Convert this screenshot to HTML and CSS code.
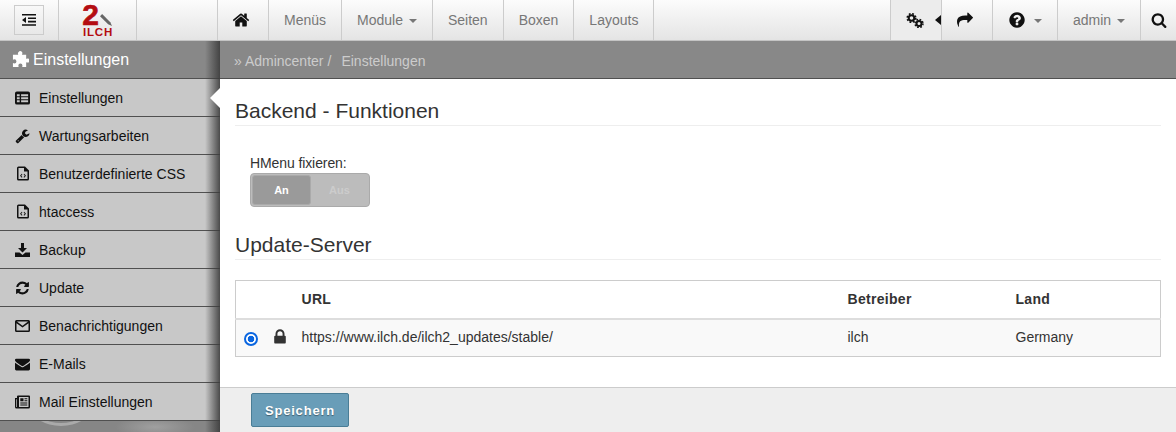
FILE: index.html
```html
<!DOCTYPE html>
<html lang="de">
<head>
<meta charset="utf-8">
<title>Einstellungen</title>
<link rel="stylesheet" href="styles.css">
</head>
<body>
<svg class="defs" width="0" height="0">
  <defs>
    <symbol id="i-home" viewBox="0 0 1792 1792"><path d="M1472 992v480q0 26-19 45t-45 19h-384v-384h-256v384h-384q-26 0-45-19t-19-45v-480q0-1 .5-3t.5-3l575-474 575 474q1 2 1 6zm223-69l-62 74q-8 9-21 11h-3q-13 0-21-7l-692-577-692 577q-12 8-24 7-13-2-21-11l-62-74q-8-10-7-23.500t11-21.500l719-599q32-26 76-26t76 26l244 204v-195q0-14 9-23t23-9h192q14 0 23 9t9 23v408l219 182q10 8 11 21.500t-7 23.500z"/></symbol>
    <symbol id="i-search" viewBox="0 0 1792 1792"><path d="M1216 832q0-185-131.500-316.500t-316.500-131.500-316.500 131.500-131.500 316.500 131.500 316.500 316.500 131.500 316.500-131.500 131.500-316.500zm512 832q0 52-38 90t-90 38q-54 0-90-38l-343-342q-179 124-399 124-143 0-273.500-55.500t-225-150-150-225-55.500-273.500 55.500-273.500 150-225 225-150 273.500-55.500 273.500 55.500 225 150 150 225 55.500 273.500q0 220-124 399l343 343q37 37 37 90z"/></symbol>
    <symbol id="i-lock" viewBox="0 0 1792 1792"><path d="M640 768h512v-192q0-106-75-181t-181-75-181 75-75 181v192zm832 96v576q0 40-28 68t-68 28h-960q-40 0-68-28t-28-68v-576q0-40 28-68t68-28h32v-192q0-184 132-316t316-132 316 132 132 316v192h32q40 0 68 28t28 68z"/></symbol>
    <symbol id="i-question" viewBox="0 0 1792 1792"><path d="M1024 1376v-192q0-14-9-23t-23-9h-192q-14 0-23 9t-9 23v192q0 14 9 23t23 9h192q14 0 23-9t9-23zm256-672q0-88-55.500-163t-138.500-116-170-41q-243 0-371 213-15 24 8 42l132 100q7 6 19 6 16 0 25-12 53-68 86-92 34-24 86-24 48 0 85.500 26t37.500 59q0 38-20 61t-68 45q-63 28-115.500 86.500t-52.500 125.500v36q0 14 9 23t23 9h192q14 0 23-9t9-23q0-19 21.500-49.500t54.500-49.500q32-18 49-28.500t46-35 44.500-48 28-60.500 12.500-81zm384 192q0 209-103 385.500t-279.500 279.500-385.500 103-385.500-103-279.500-279.500-103-385.500 103-385.500 279.500-279.500 385.500-103 385.500 103 279.500 279.500 103 385.500z"/></symbol>
    <symbol id="i-share" viewBox="0 0 1792 1792"><path d="M1792 640q0 26-19 45l-512 512q-19 19-45 19t-45-19-19-45v-256h-224q-98 0-175.500 6t-154 21.500-133 42.500-105.500 69.500-80 101-48.500 138.500-17.500 181q0 55 5 123 0 6 2.500 23.500t2.500 26.500q0 15-8.500 25t-23.500 10q-16 0-28-17-7-9-13-22t-13.500-30-10.500-24q-127-285-127-451 0-199 53-333 162-403 875-403h224v-256q0-26 19-45t45-19 45 19l512 512q19 19 19 45z"/></symbol>
    <symbol id="i-envelope" viewBox="0 0 1792 1792"><path d="M1792 710v794q0 66-47 113t-113 47h-1472q-66 0-113-47t-47-113v-794q44 49 101 87 362 246 497 345 57 42 92.500 65.500t94.500 48 110 24.500h2q51 0 110-24.500t94.500-48 92.500-65.500q170-123 498-345 57-39 100-87zm0-294q0 79-49 151t-122 123q-376 261-468 325-10 7-42.500 30.500t-54 38-52 32.500-57.500 27-50 9h-2q-23 0-50-9t-57.500-27-52-32.500-54-38-42.500-30.500q-91-64-262-182.500t-205-142.500q-62-42-117-115.500t-55-136.500q0-78 41.500-130t118.500-52h1472q65 0 112.500 47t47.500 113z"/></symbol>
    <symbol id="i-refresh" viewBox="0 0 1792 1792"><path d="M1639 1056q0 5-1 7-64 268-268 434.500t-478 166.500q-146 0-282.500-55t-243.500-157l-129 129q-19 19-45 19t-45-19-19-45v-448q0-26 19-45t45-19h448q26 0 45 19t19 45-19 45l-137 137q71 66 161 102t187 36q134 0 250-65t186-179q11-17 53-117 8-23 30-23h192q13 0 22.500 9.500t9.500 22.500zm25-800v448q0 26-19 45t-45 19h-448q-26 0-45-19t-19-45 19-45l138-138q-148-137-349-137-134 0-250 65t-186 179q-11 17-53 117-8 23-30 23h-199q-13 0-22.500-9.500t-9.500-22.500v-7q65-268 270-434.500t480-166.500q146 0 284 55.500t245 156.500l130-129q19-19 45-19t45 19 19 45z"/></symbol>
    <symbol id="i-wrench" viewBox="0 0 1792 1792"><path d="M448 1472q0-26-19-45t-45-19-45 19-19 45 19 45 45 19 45-19 19-45zm644-420l-682 682q-37 37-90 37-52 0-91-37l-106-108q-38-36-38-90 0-53 38-91l681-681q39 98 114.500 173.500t173.500 114.500zm634-435q0 39-23 106-47 134-164.500 217.500t-258.500 83.500q-185 0-316.500-131.500t-131.500-316.500 131.500-316.500 316.500-131.500q58 0 121.500 16.500t107.500 46.500q16 11 16 28t-16 28l-293 169v224l193 107q5-3 79-48.500t135.500-81 70.500-35.500q15 0 23.500 10t8.500 25z"/></symbol>
    <symbol id="i-table" viewBox="0 0 16 14"><path fill-rule="evenodd" d="M2 0h12a2 2 0 0 1 2 2v10a2 2 0 0 1-2 2H2a2 2 0 0 1-2-2V2a2 2 0 0 1 2-2zM2 3v2h3V3zm4.500 0v2H14V3zM2 6.200v2h3v-2zm4.500 0v2H14v-2zM2 9.500v2h3v-2zm4.500 0v2H14v-2z"/></symbol>
    <symbol id="i-code" viewBox="0 0 12 14"><path fill-rule="evenodd" d="M2 0h6l4 4v8.500A1.500 1.500 0 0 1 10.500 14h-9A1.500 1.500 0 0 1 0 12.500v-11A1.500 1.500 0 0 1 1.500 0zM1.500 1.500v11h9V5H7V1.500z"/><path d="M4.800 7.200l.6.6-1.200 1.400 1.200 1.400-.6.600-1.800-2zM7.200 7.200l1.800 2-1.800 2-.6-.6 1.200-1.400-1.200-1.400z"/></symbol>
    <symbol id="i-download" viewBox="0 0 15 14"><path d="M6 0h3v5h3L7.500 9.500 3 5h3z"/><path d="M0 9.500h4.500l3 2.500 3-2.500H15V14H0z"/></symbol>
    <symbol id="i-envelope-o" viewBox="0 0 15 12"><path fill-rule="evenodd" d="M1.500 0h12A1.500 1.500 0 0 1 15 1.500v9a1.500 1.500 0 0 1-1.500 1.500h-12A1.500 1.500 0 0 1 0 10.500v-9A1.500 1.500 0 0 1 1.500 0zm0 3.200v7.300h12V3.200L7.500 7.600zm.4-1.700l5.600 4.300 5.600-4.300z"/></symbol>
    <symbol id="i-news" viewBox="0 0 15 13"><path fill-rule="evenodd" d="M3 0h11a1 1 0 0 1 1 1v10.500a1.500 1.500 0 0 1-1.500 1.500H1.500A1.500 1.500 0 0 1 0 11.500V2.500h2V1a1 1 0 0 1 1-1zM1.300 3.800v7.700h.7V3.800zM4 1.500v10h9.500v-10zM5.300 2.800h3.200v3H5.300zm4.200 0h2.800v1H9.500zm0 2h2.800v1H9.500zM5.300 7h7v1h-7zm0 2h7v1h-7z"/></symbol>
    <symbol id="i-puzzle" viewBox="0 0 18 18"><path d="M7 1a2.200 2.200 0 0 1 4 1.500c0 .6-.4 1-.4 1.500H15v4.300c.5 0 1-.4 1.500-.4a2.200 2.200 0 0 1 0 4.400c-.5 0-1-.4-1.500-.4V17h-4.300c0-.5.4-1 .4-1.500a2.200 2.200 0 0 0-4.400 0c0 .5.4 1 .4 1.500H1v-4.200c.5 0 1 .4 1.500.4a2.200 2.200 0 0 0 0-4.400c-.5 0-1 .4-1.500.4V4h5.600c0-.5-.4-1-.4-1.500 0-.5.300-1.100.8-1.500z"/></symbol>
    <symbol id="i-indent" viewBox="0 0 14 12"><path d="M0 0h14v1.600H0zM6 3.400h8V5H6zM6 6.800h8v1.600H6zM0 10.200h14v1.600H0zM4 3v6L0 6z"/></symbol>
    <symbol id="i-cogs" viewBox="0 0 18 15"><circle cx="5.500" cy="5" r="2.800" fill="none" stroke="currentColor" stroke-width="2"/><circle cx="5.500" cy="5" r="4.300" fill="none" stroke="currentColor" stroke-width="1.600" stroke-dasharray="1.800 1.600"/><circle cx="13" cy="10.500" r="2.500" fill="none" stroke="currentColor" stroke-width="2"/><circle cx="13" cy="10.500" r="4" fill="none" stroke="currentColor" stroke-width="1.500" stroke-dasharray="1.700 1.450"/></symbol>
  </defs>
</svg>

<header class="topbar">
  <div class="nav-cell toggle-cell"><button class="side-toggle" type="button"><svg class="ic ic-14"><use href="#i-indent"/></svg></button></div>
  <div class="nav-cell brand">
    <svg class="pencil" viewBox="0 0 14 14"><path d="M0 2.500L2.500 0 12 9.500 14 14 9.500 12z" fill="#666"/></svg>
    <span class="brand-two">2</span>
    <span class="brand-name">ILCH</span>
  </div>
  <div class="nav-cell brand-gap"></div>
  <a class="nav-item nav-icon"><svg class="ic ic-home"><use href="#i-home"/></svg></a>
  <a class="nav-item">Menüs</a>
  <a class="nav-item">Module<i class="caret"></i></a>
  <a class="nav-item">Seiten</a>
  <a class="nav-item">Boxen</a>
  <a class="nav-item">Layouts</a>
  <div class="nav-right">
    <a class="nav-item gear-item"><svg class="ic ic-cogs"><use href="#i-cogs"/></svg><i class="tip"></i></a>
    <a class="nav-item share-item"><svg class="ic ic-16"><use href="#i-share"/></svg></a>
    <a class="nav-item help-item"><svg class="ic ic-18"><use href="#i-question"/></svg><i class="caret"></i></a>
    <a class="nav-item">admin<i class="caret"></i></a>
    <a class="nav-item search-item"><svg class="ic ic-16"><use href="#i-search"/></svg></a>
  </div>
</header>

<div class="frame">
  <aside class="sidebar">
    <div class="side-title"><svg class="ic ic-puzzle"><use href="#i-puzzle"/></svg>Einstellungen</div>
    <ul class="side-list">
      <li class="side-item active"><span class="slot"><svg class="ic ic-table"><use href="#i-table"/></svg></span>Einstellungen</li>
      <li class="side-item"><span class="slot"><svg class="ic ic-16"><use href="#i-wrench"/></svg></span>Wartungsarbeiten</li>
      <li class="side-item"><span class="slot"><svg class="ic ic-code"><use href="#i-code"/></svg></span>Benutzerdefinierte CSS</li>
      <li class="side-item"><span class="slot"><svg class="ic ic-code"><use href="#i-code"/></svg></span>htaccess</li>
      <li class="side-item"><span class="slot"><svg class="ic ic-table"><use href="#i-download"/></svg></span>Backup</li>
      <li class="side-item"><span class="slot"><svg class="ic ic-16"><use href="#i-refresh"/></svg></span>Update</li>
      <li class="side-item"><span class="slot"><svg class="ic ic-mail"><use href="#i-envelope-o"/></svg></span>Benachrichtigungen</li>
      <li class="side-item"><span class="slot"><svg class="ic ic-16"><use href="#i-envelope"/></svg></span>E-Mails</li>
      <li class="side-item"><span class="slot"><svg class="ic ic-table"><use href="#i-news"/></svg></span>Mail Einstellungen</li>
    </ul>
    <div class="side-rest"><i class="side-ring"></i></div>
  </aside>

  <main class="main">
    <div class="crumbs"><span>» Admincenter</span><span class="crumb-sep">/</span><span>Einstellungen</span></div>
    <div class="content">
      <h2 class="section-title">Backend - Funktionen</h2>
      <div class="field">
        <div class="field-label">HMenu fixieren:</div>
        <div class="switch"><span class="switch-on">An</span><span class="switch-off">Aus</span></div>
      </div>
      <h2 class="section-title second">Update-Server</h2>
      <table class="servers">
        <colgroup><col class="c-radio"><col class="c-lock"><col class="c-url"><col class="c-op"><col></colgroup>
        <thead>
          <tr><th></th><th></th><th>URL</th><th>Betreiber</th><th>Land</th></tr>
        </thead>
        <tbody>
          <tr>
            <td class="radio-cell"><input class="radio" type="radio" name="server" checked></td>
            <td class="lock-cell"><svg class="ic ic-18"><use href="#i-lock"/></svg></td>
            <td>https://www.ilch.de/ilch2_updates/stable/</td>
            <td>ilch</td>
            <td>Germany</td>
          </tr>
        </tbody>
      </table>
    </div>
    <footer class="actions"><button class="save" type="button">Speichern</button></footer>
  </main>
</div>
</body>
</html>
```
FILE: styles.css
```css
* { box-sizing: border-box; }
html, body { margin: 0; height: 432px; overflow: hidden; }
body { font-family: "Liberation Sans", Arial, sans-serif; font-size: 14px; color: #333; background: #fff; }
.defs { position: absolute; }
.ic { display: block; fill: currentColor; }
.ic-14 { width: 14px; height: 12px; }
.ic-16 { width: 16px; height: 16px; }
.ic-18 { width: 18px; height: 18px; }
.ic-home { width: 18px; height: 18px; }
.ic-cogs { width: 18px; height: 15px; }
.ic-puzzle { width: 17px; height: 17px; margin-right: 4px; }
.ic-table { width: 15px; height: 14px; }
.ic-code { width: 12px; height: 15px; }
.ic-mail { width: 15px; height: 12px; }

.topbar { display: flex; height: 41px; border-bottom: 1px solid #c4c4c4; background: linear-gradient(#fcfcfc, #e4e4e4); color: #777; }
.nav-cell { display: flex; align-items: center; justify-content: center; border-right: 1px solid #ccc; height: 40px; }
.toggle-cell { width: 59px; padding-right: 1px; }
.side-toggle { width: 30px; height: 30px; padding: 0; display: flex; align-items: center; justify-content: center; border: 1px solid #ccc; background: transparent; color: #111; margin-top: -1px; }
.brand { width: 78px; position: relative; flex-direction: column; justify-content: flex-start; }
.brand-two { font: 700 30px/24px "Liberation Sans", sans-serif; color: #b40d12; -webkit-text-stroke: .6px #b40d12; margin: 3px 14px 0 0; height: 24px; }
.brand-name { font: 700 11.5px/10px "Liberation Sans", sans-serif; letter-spacing: .8px; color: #b40d12; margin: 0 -1px 0 0; }
.pencil { position: absolute; left: 41px; top: 14px; width: 12px; height: 12px; }
.brand-gap { width: 81px; }
.nav-item { display: flex; align-items: center; height: 40px; padding: 0 15px; border-right: 1px solid #ccc; color: #777; white-space: nowrap; }
.nav-icon { width: 51px; padding: 0 0 0 14px; color: #111; }
.caret { display: inline-block; margin-left: 6px; border-top: 4px solid #777; border-left: 4px solid transparent; border-right: 4px solid transparent; margin-top: 1px; }
.nav-right { display: flex; margin-left: auto; border-left: 1px solid #ccc; }
.nav-right .nav-item { color: #777; }
.nav-right .ic { color: #111; }
.gear-item { width: 51px; padding: 0 0 0 15px; position: relative; background: #ececec; }
.tip { position: absolute; right: 0; top: 15px; border-right: 6px solid #111; border-top: 5.5px solid transparent; border-bottom: 5.5px solid transparent; }
.share-item { width: 51px; padding: 0 0 0 15px; }
.help-item { width: 65px; }
.help-item .caret { margin-left: 8px; }
.nav-right .nav-item:nth-child(4) { width: 83px; padding-right: 0; }
.search-item { width: 35px; padding: 0 0 0 10px; border-right: 0; }

.frame { display: flex; height: 391px; }
.sidebar { width: 220px; flex: none; position: relative; background: #c8c8c8; display: flex; flex-direction: column; }
.sidebar::after { content: ""; position: absolute; top: 0; bottom: 0; right: 0; width: 15px; background: linear-gradient(to right, rgba(60,60,60,0), rgba(60,60,60,.9)); pointer-events: none; }
.side-title { display: flex; align-items: center; height: 38px; padding-left: 12px; background: #888; color: #fff; font-size: 16px; border-bottom: 1px solid #505050; }
.side-list { list-style: none; margin: 0; padding: 0; }
.side-item { display: flex; align-items: center; height: 38px; padding-left: 15px; color: #111; border-bottom: 1px solid #505050; position: relative; }
.slot { width: 24px; flex: none; display: flex; justify-content: flex-start; padding-right: 9px; }
.slot .ic-code { margin-left: 2px; flex: none; }
.active::after { content: ""; position: absolute; right: 0; top: 9px; z-index: 2; border-right: 10px solid #fff; border-top: 10px solid transparent; border-bottom: 10px solid transparent; }
.side-rest { flex: 1; background: radial-gradient(ellipse 40px 10px at 155px 6px, #a0a0a0, #868686); position: relative; overflow: hidden; }
.side-ring { position: absolute; left: 31px; top: -34px; width: 60px; height: 39px; border-radius: 50%; border: 3px solid #aaa; }

.main { flex: 1; display: flex; flex-direction: column; min-width: 0; }
.crumbs { display: flex; align-items: center; height: 38px; padding: 3px 0 0 14px; background: #888; color: #ccc; border-bottom: 1px solid #505050; }
.crumb-sep { margin: 0 10px 0 4px; }
.content { flex: 1; padding: 0 15px; }
.section-title { margin: 20px 0 0; padding-bottom: 3px; height: 27px; line-height: 24px; font-size: 21px; font-weight: 400; color: #333; border-bottom: 1px solid #eee; }
.second { margin-top: 26px; }
.field { padding: 28px 0 0 15px; height: 81px; }
.field-label { line-height: 18px; height: 19px; letter-spacing: -.1px; }
.switch { display: flex; width: 120px; height: 34px; padding: 1px; background: #bcbcbc; border: 1px solid #aaa; border-radius: 4px; }
.switch-on, .switch-off { display: flex; align-items: center; justify-content: center; font-size: 11px; font-weight: 700; }
.switch-on { width: 59px; color: #fff; background: #9a9a9a; border-radius: 3px; border: 1px solid #aaa; }
.switch-off { flex: 1; color: #ccc; }
.servers { width: 926px; margin-top: 20px; border-collapse: collapse; table-layout: fixed; border: 1px solid #ccc; }
.c-radio { width: 36px; }
.c-lock { width: 30px; }
.c-url { width: 546px; }
.c-op { width: 168px; }
.servers th { height: 38px; padding: 0; text-align: left; font-weight: 700; letter-spacing: .3px; border-bottom: 2px solid #ddd; }
.servers td { height: 38px; padding: 0 0 2px; background: #f9f9f9; }
.servers .radio-cell { padding: 2px 0 0 8px; }
.radio { display: block; margin: 0; width: 14px; height: 14px; appearance: none; border: 2px solid #0a66e0; border-radius: 50%; background: radial-gradient(circle, #0a66e0 3px, #fff 3.6px); }
.lock-cell { color: #333; }
.lock-cell .ic { margin-left: -1px; }
.actions { height: 45px; background: #eee; border-top: 1px solid #ccc; padding: 5px 0 0 31px; }
.save { width: 98px; height: 34px; padding: 0; background: #699db8; border: 1px solid #4a7d96; border-radius: 2px; color: #fff; font: 700 13px "Liberation Sans", sans-serif; letter-spacing: .8px; text-shadow: 0 1px 1px rgba(0,0,0,.4); }
```
